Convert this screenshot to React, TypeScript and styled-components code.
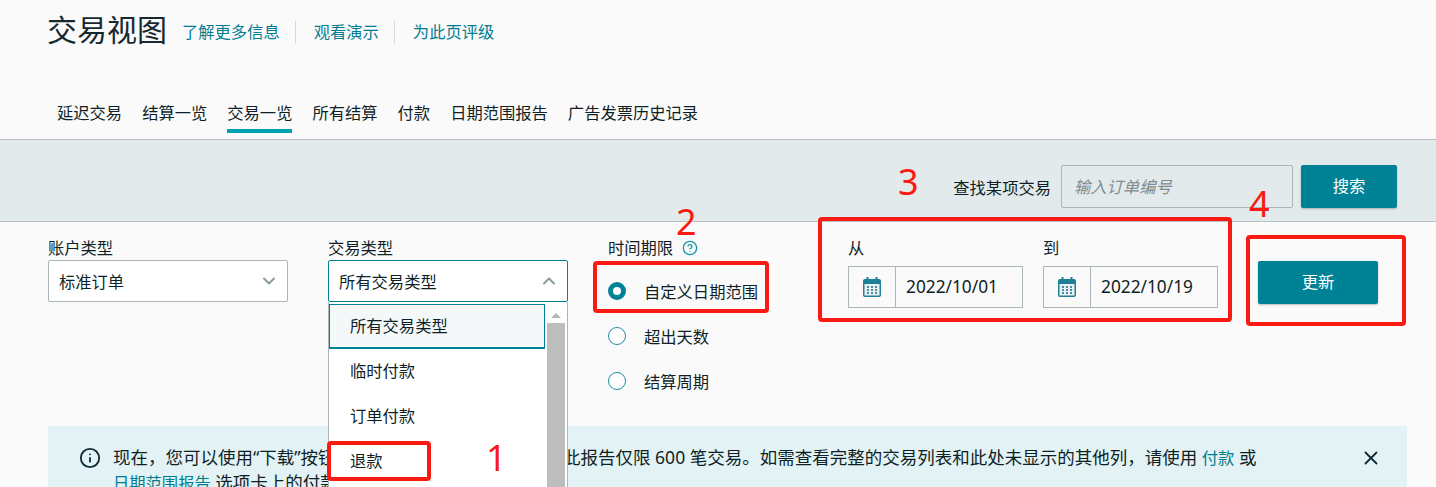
import React, { FunctionComponent } from 'react';
import styled, { createGlobalStyle } from 'styled-components';
import { ChevronDown, ChevronUp, CircleHelp, Info, X } from 'lucide-react';

const TABS = ['延迟交易', '结算一览', '交易一览', '所有结算', '付款', '日期范围报告', '广告发票历史记录'];
const MENU_ITEMS = ['所有交易类型', '临时付款', '订单付款', '退款'];
const PERIODS = ['自定义日期范围', '超出天数', '结算周期'];

const CalendarIcon: FunctionComponent = () => (
  <svg width="20" height="22" viewBox="0 0 20 22">
    <rect x="1" y="3" width="18" height="18" rx="2" fill="#1f7f96" />
    <rect x="4.5" y="1" width="2" height="4" fill="#1f7f96" />
    <rect x="13.5" y="1" width="2" height="4" fill="#1f7f96" />
    <rect x="2.5" y="8" width="15" height="11.5" fill="#e9f1f3" />
    {[10, 13, 16].map((y) =>
      [5, 9, 13].map((x) => <rect key={`${x}-${y}`} x={x} y={y} width="2" height="2" fill="#4d8a9b" />)
    )}
  </svg>
);

const App: FunctionComponent = () => {
  return (
    <Page>
      <GlobalStyle />
      <Header>
        <Title>交易视图</Title>
        <HeaderLinks>
          <HeaderLink>了解更多信息</HeaderLink>
          <HeaderLink>观看演示</HeaderLink>
          <HeaderLink>为此页评级</HeaderLink>
        </HeaderLinks>
      </Header>

      <Tabs>
        {TABS.map((tab) => (
          <Tab key={tab} $active={tab === '交易一览'}>
            {tab}
          </Tab>
        ))}
      </Tabs>

      <SearchBand>
        <SearchLabel>查找某项交易</SearchLabel>
        <SearchInput>输入订单编号</SearchInput>
        <SearchButton>搜索</SearchButton>
      </SearchBand>

      <Filters>
        <SelectColumn>
          <FieldLabel>账户类型</FieldLabel>
          <Select>
            标准订单
            <ChevronDown size={20} color="#8a9a9e" strokeWidth={2.4} />
          </Select>
        </SelectColumn>

        <SelectColumn>
          <FieldLabel>交易类型</FieldLabel>
          <Select $open>
            所有交易类型
            <ChevronUp size={20} color="#8a9a9e" strokeWidth={2.4} />
          </Select>
          <Menu>
            <MenuList>
              {MENU_ITEMS.map((item, i) => (
                <MenuItem key={item} $selected={i === 0}>
                  {item}
                </MenuItem>
              ))}
            </MenuList>
            <MenuScroll>
              <ScrollArrow />
              <ScrollThumb />
            </MenuScroll>
          </Menu>
        </SelectColumn>

        <PeriodColumn>
          <FieldLabel>
            时间期限
            <CircleHelp size={16} color="#1a98ad" />
          </FieldLabel>
          <RadioList>
            {PERIODS.map((period, i) => (
              <RadioRow key={period}>
                <Radio $checked={i === 0} />
                {period}
              </RadioRow>
            ))}
          </RadioList>
        </PeriodColumn>

        <DateColumn>
          <FieldLabel>从</FieldLabel>
          <DateInput>
            <DateIcon>
              <CalendarIcon />
            </DateIcon>
            <DateValue>2022/10/01</DateValue>
          </DateInput>
        </DateColumn>
        <DateColumn>
          <FieldLabel>到</FieldLabel>
          <DateInput>
            <DateIcon>
              <CalendarIcon />
            </DateIcon>
            <DateValue>2022/10/19</DateValue>
          </DateInput>
        </DateColumn>

        <UpdateButton>更新</UpdateButton>
      </Filters>

      <Alert>
        <AlertIcon>
          <Info size={22} color="#0f2b36" strokeWidth={2} />
        </AlertIcon>
        <AlertText>
          现在，您可以使用“下载”按钮下载当前视图中的所有交易。此报告仅限 600 笔交易。如需查看完整的交易列表和此处未显示的其他列，请使用{' '}
          <AlertLink>付款</AlertLink> 或
          <br />
          <AlertLink>日期范围报告</AlertLink> 选项卡上的付款报告。
        </AlertText>
        <AlertClose>
          <X size={22} color="#0f2b36" strokeWidth={2} />
        </AlertClose>
      </Alert>

      <Mark $left={327} $top={441} $width={104} $height={40} />
      <Mark $left={593} $top={261} $width={176} $height={52} />
      <Mark $left={818} $top={217} $width={414} $height={105} />
      <Mark $left={1246} $top={235} $width={160} $height={91} />
      <MarkNumber $left={486} $top={433}>1</MarkNumber>
      <MarkNumber $left={676} $top={197}>2</MarkNumber>
      <MarkNumber $left={898} $top={157}>3</MarkNumber>
      <MarkNumber $left={1249} $top={179}>4</MarkNumber>
    </Page>
  );
};

const GlobalStyle = createGlobalStyle`
  html, body {
    margin: 0;
    padding: 0;
    background: #fafafa;
  }
`;

const Page = styled.div`
  position: relative;
  width: 1436px;
  height: 487px;
  overflow: hidden;
  background: #fafafa;
  color: #0f1f26;
  font-family: 'Noto Sans', 'Noto Sans CJK SC', sans-serif;
  font-size: 16.3px;
`;

const Header = styled.div`
  display: flex;
  align-items: center;
  height: 60px;
  padding-left: 47px;
`;

const Title = styled.h1`
  margin: 0 15px 0 0;
  font-size: 30px;
  font-weight: 400;
  line-height: 40px;
  color: #16292f;
`;

const HeaderLinks = styled.div`
  display: flex;
  align-items: center;
  margin-top: 4px;
`;

const HeaderLink = styled.a`
  padding: 0 15px 0 18px;
  border-right: 1px solid #d5dbdb;
  line-height: 23px;
  color: #007d91;

  &:first-child {
    padding-left: 0;
  }

  &:last-child {
    border-right: none;
  }
`;

const Tabs = styled.div`
  display: flex;
  gap: 20px;
  height: 79px;
  padding: 40px 0 0 57px;
  box-sizing: border-box;
`;

const Tab = styled.div<{ $active?: boolean }>`
  height: 33px;
  line-height: 27px;
  box-sizing: border-box;
  border-bottom: 4px solid ${(props) => (props.$active ? '#00a1b3' : 'transparent')};
`;

const SearchBand = styled.div`
  display: flex;
  align-items: center;
  justify-content: flex-end;
  height: 83px;
  padding: 12px 39px 0 0;
  box-sizing: border-box;
  background: #e3eaec;
  border-top: 1px solid #b8bfbf;
  border-bottom: 1px solid #b8bfbf;
`;

const SearchLabel = styled.span`
  margin-right: 10px;
`;

const SearchInput = styled.div`
  width: 232px;
  height: 43px;
  margin-right: 8px;
  padding-left: 12px;
  box-sizing: border-box;
  line-height: 43px;
  border: 1px solid #aab7b8;
  border-radius: 2px;
  color: #7f8c8f;
  font-style: italic;
`;

const SearchButton = styled.div`
  width: 96px;
  height: 43px;
  line-height: 43px;
  text-align: center;
  color: #ffffff;
  background: #008296;
  border-radius: 2px;
  box-shadow: 0 1px 2px rgba(0, 0, 0, 0.25);
`;

const Filters = styled.div`
  display: flex;
  align-items: flex-start;
  height: 204px;
  padding: 16px 0 0 48px;
  box-sizing: border-box;
`;

const FieldLabel = styled.div`
  display: flex;
  align-items: center;
  gap: 9px;
  height: 22px;
  padding-bottom: 2px;
  box-sizing: border-box;
  line-height: 20px;
`;

const SelectColumn = styled.div`
  position: relative;
  width: 240px;
  margin-right: 40px;
`;

const Select = styled.div<{ $open?: boolean }>`
  display: flex;
  align-items: center;
  justify-content: space-between;
  height: 42px;
  padding: 0 8px 0 10px;
  box-sizing: border-box;
  background: #ffffff;
  border: 1px solid ${(props) => (props.$open ? '#008296' : '#aab7b8')};
  border-radius: 2px;
`;

const Menu = styled.div`
  position: absolute;
  z-index: 2;
  top: 64px;
  left: 0;
  display: flex;
  width: 240px;
  height: 200px;
  box-sizing: border-box;
  padding-top: 2px;
  background: #ffffff;
  border-left: 1px solid #aab7b8;
  border-right: 1px solid #aab7b8;
`;

const MenuList = styled.div`
  flex: 1;
`;

const MenuItem = styled.div<{ $selected?: boolean }>`
  height: 45px;
  padding-left: 21px;
  box-sizing: border-box;
  line-height: ${(props) => (props.$selected ? '42px' : '45px')};
  ${(props) =>
    props.$selected &&
    `
    background: #f4f8f9;
    border: 1px solid #008296;
    border-bottom-width: 2px;
    padding-left: 20px;
  `}
`;

const MenuScroll = styled.div`
  display: flex;
  flex-direction: column;
  align-items: center;
  width: 18px;
  margin-left: 2px;
  margin-right: 2px;
`;

const ScrollArrow = styled.div`
  width: 0;
  height: 0;
  margin: 9px 0 5px;
  border-left: 5px solid transparent;
  border-right: 5px solid transparent;
  border-bottom: 5px solid #b5b5b5;
`;

const ScrollThumb = styled.div`
  flex: 1;
  width: 100%;
  background: #bdbdbd;
`;

const PeriodColumn = styled.div`
  width: 240px;
  margin-right: 0;
`;

const RadioList = styled.div`
  display: flex;
  flex-direction: column;
  gap: 22.4px;
  margin-top: 19px;
`;

const RadioRow = styled.div`
  display: flex;
  align-items: center;
  gap: 18px;
  height: 23px;
`;

const Radio = styled.span<{ $checked?: boolean }>`
  width: 18px;
  height: 18px;
  box-sizing: border-box;
  border-radius: 50%;
  background: #ffffff;
  border: ${(props) => (props.$checked ? '5px solid #008296' : '1px solid #1a8ea0')};
`;

const DateColumn = styled.div`
  width: 175px;
  margin-right: 20px;
`;

const DateInput = styled.div`
  display: flex;
  height: 42px;
  margin-top: 6px;
  box-sizing: border-box;
  border: 1px solid #aab7b8;
  background: #fafafa;
`;

const DateIcon = styled.div`
  display: flex;
  align-items: center;
  justify-content: center;
  width: 46px;
  border-right: 1px solid #aab7b8;
`;

const DateValue = styled.div`
  padding-left: 10px;
  line-height: 40px;
  font-size: 17.3px;
`;

const UpdateButton = styled.div`
  width: 120px;
  height: 43px;
  margin: 23px 0 0 20px;
  line-height: 43px;
  text-align: center;
  color: #ffffff;
  background: #008296;
  border-radius: 2px;
  box-shadow: 0 1px 2px rgba(0, 0, 0, 0.25);
`;

const Alert = styled.div`
  display: flex;
  align-items: flex-start;
  width: 1359px;
  height: 80px;
  margin-left: 48px;
  padding-top: 19px;
  box-sizing: border-box;
  background: #e3f2f4;
`;

const AlertIcon = styled.div`
  display: flex;
  margin: 2px 12px 0 31px;
`;

const AlertText = styled.div`
  width: 1150px;
  font-size: 17.5px;
  line-height: 24px;
`;

const AlertLink = styled.a`
  font-size: 16.3px;
  color: #007d91;
`;

const AlertClose = styled.div`
  display: flex;
  margin: 2px 0 0 97px;
`;

const Mark = styled.div<{ $left: number; $top: number; $width: number; $height: number }>`
  position: absolute;
  z-index: 3;
  left: ${(props) => props.$left}px;
  top: ${(props) => props.$top}px;
  width: ${(props) => props.$width}px;
  height: ${(props) => props.$height}px;
  box-sizing: border-box;
  border: 4px solid #fb1a12;
  border-radius: 4px;
`;

const MarkNumber = styled.div<{ $left: number; $top: number }>`
  position: absolute;
  z-index: 3;
  left: ${(props) => props.$left}px;
  top: ${(props) => props.$top}px;
  font-size: 36px;
  line-height: 50px;
  color: #fb1a12;
`;

export default App;
